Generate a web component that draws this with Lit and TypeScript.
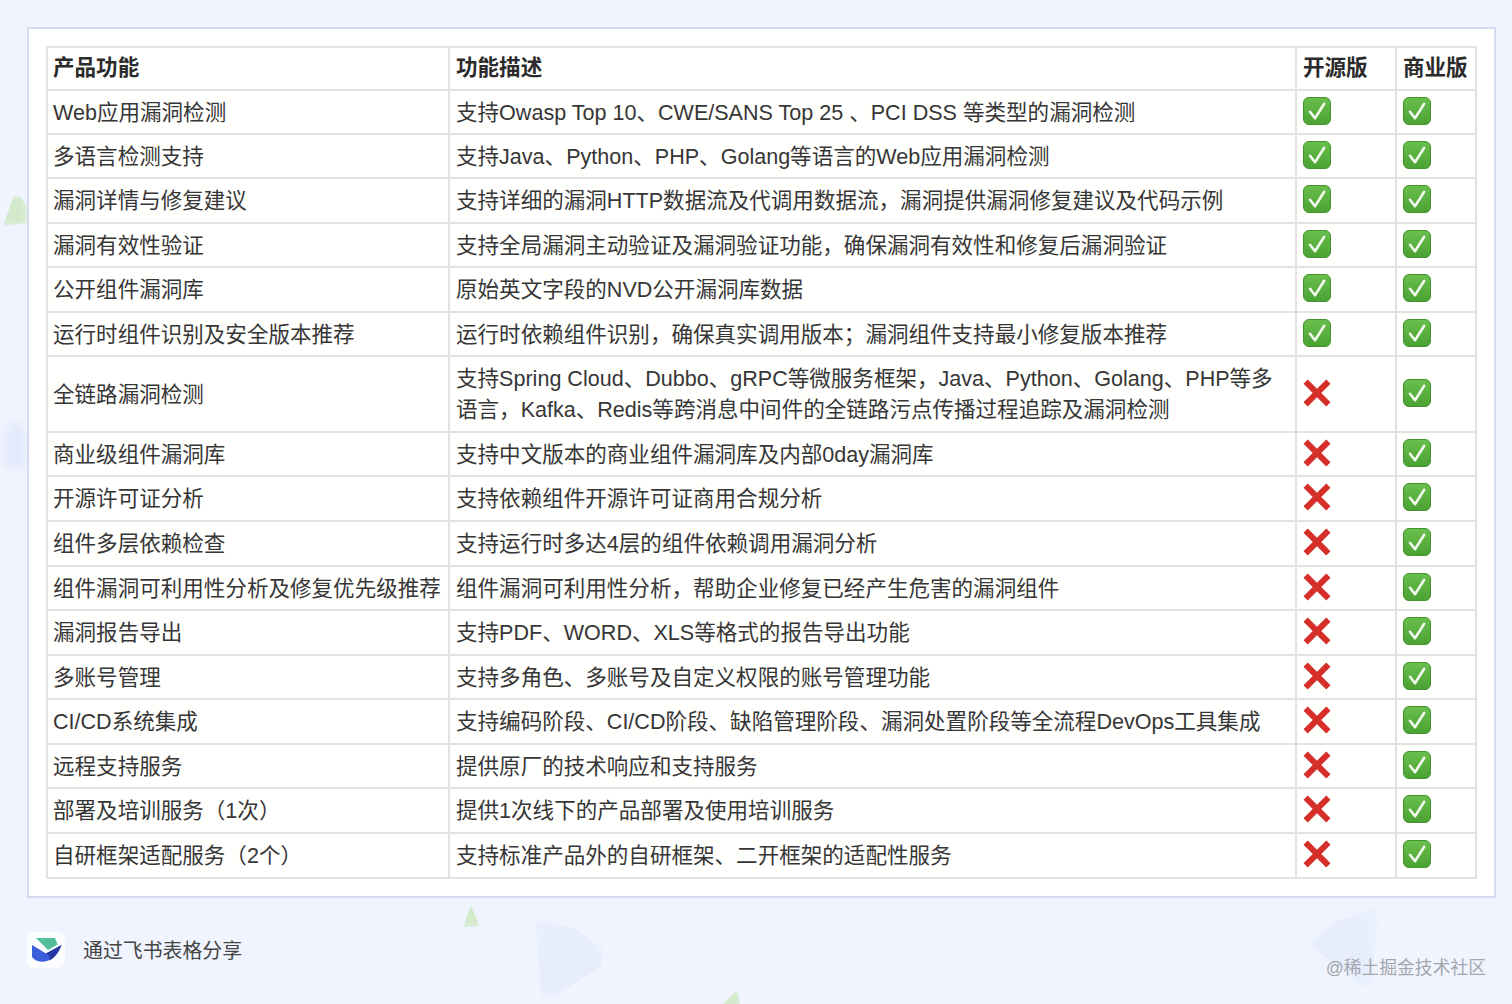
import { LitElement, html, css, svg } from "lit";
import { customElement } from "lit/decorators.js";

type Row = { name: string; desc: string; open: boolean; h: number };

const rows: Row[] = [
  { name: "Web应用漏洞检测", desc: "支持Owasp Top 10、CWE/SANS Top 25 、PCI DSS 等类型的漏洞检测", open: true, h: 44 },
  { name: "多语言检测支持", desc: "支持Java、Python、PHP、Golang等语言的Web应用漏洞检测", open: true, h: 44 },
  { name: "漏洞详情与修复建议", desc: "支持详细的漏洞HTTP数据流及代调用数据流，漏洞提供漏洞修复建议及代码示例", open: true, h: 45 },
  { name: "漏洞有效性验证", desc: "支持全局漏洞主动验证及漏洞验证功能，确保漏洞有效性和修复后漏洞验证", open: true, h: 44 },
  { name: "公开组件漏洞库", desc: "原始英文字段的NVD公开漏洞库数据", open: true, h: 45 },
  { name: "运行时组件识别及安全版本推荐", desc: "运行时依赖组件识别，确保真实调用版本；漏洞组件支持最小修复版本推荐", open: true, h: 44 },
  { name: "全链路漏洞检测", desc: "支持Spring Cloud、Dubbo、gRPC等微服务框架，Java、Python、Golang、PHP等多语言，Kafka、Redis等跨消息中间件的全链路污点传播过程追踪及漏洞检测", open: false, h: 76 },
  { name: "商业级组件漏洞库", desc: "支持中文版本的商业组件漏洞库及内部0day漏洞库", open: false, h: 44 },
  { name: "开源许可证分析", desc: "支持依赖组件开源许可证商用合规分析", open: false, h: 45 },
  { name: "组件多层依赖检查", desc: "支持运行时多达4层的组件依赖调用漏洞分析", open: false, h: 45 },
  { name: "组件漏洞可利用性分析及修复优先级推荐", desc: "组件漏洞可利用性分析，帮助企业修复已经产生危害的漏洞组件", open: false, h: 44 },
  { name: "漏洞报告导出", desc: "支持PDF、WORD、XLS等格式的报告导出功能", open: false, h: 45 },
  { name: "多账号管理", desc: "支持多角色、多账号及自定义权限的账号管理功能", open: false, h: 44 },
  { name: "CI/CD系统集成", desc: "支持编码阶段、CI/CD阶段、缺陷管理阶段、漏洞处置阶段等全流程DevOps工具集成", open: false, h: 45 },
  { name: "远程支持服务", desc: "提供原厂的技术响应和支持服务", open: false, h: 44 },
  { name: "部署及培训服务（1次）", desc: "提供1次线下的产品部署及使用培训服务", open: false, h: 45 },
  { name: "自研框架适配服务（2个）", desc: "支持标准产品外的自研框架、二开框架的适配性服务", open: false, h: 45 },
];

const check = html`<svg class="mark" viewBox="0 0 28 28" aria-hidden="true">
  <defs>
    <linearGradient id="g" x1="0" y1="0" x2="0" y2="1">
      <stop offset="0" stop-color="#6abf4d" />
      <stop offset="1" stop-color="#4aa233" />
    </linearGradient>
  </defs>
  <rect x="0.5" y="0.5" width="27" height="27" rx="5.5" fill="url(#g)" stroke="#43932f" stroke-width="1" />
  <path d="M7 14.8 L12 21.2 L21.2 6.8" fill="none" stroke="#f2faee" stroke-width="2.6" stroke-linejoin="round" stroke-linecap="round" />
</svg>`;

const cross = html`<svg class="mark" viewBox="0 0 28 28" aria-hidden="true">
  <path d="M2.6 2.6 L25.4 25.4 M25.4 2.6 L2.6 25.4" fill="none" stroke="#d62f2a" stroke-width="6" stroke-linecap="butt" />
</svg>`;

const logo = svg`
  <path d="M9 6 H28 L30.5 12.5 L21 18 Z" fill="#55bd9c" />
  <path d="M5 13 L19 21.5 L34.5 13 C31 21 27 27 20 29 C14 30.5 8 29.5 5 25 Z" fill="#3a5fdc" />
  <path d="M19 21.5 L34.5 13 C32 20 28 26 22 28.5 C24 25 22 23 19 21.5 Z" fill="#23399f" />
`;

@customElement("app-root")
export class AppRoot extends LitElement {
  static styles = css`
    :host {
      display: block;
      position: relative;
      width: 1512px;
      height: 1004px;
      overflow: hidden;
      background: #f0f4fe;
      font-family: "Liberation Sans", "Noto Sans CJK SC", sans-serif;
      color: #333;
    }
    .blob {
      position: absolute;
      filter: blur(3px);
    }
    .green { background: #d2e9ca; }
    .blue { background: #e7edfc; filter: blur(6px); }
    .b1 { left: 3px; top: 196px; width: 24px; height: 30px; clip-path: polygon(45% 0, 70% 0, 100% 35%, 100% 90%, 0 100%); }
    .b2 { left: 4px; top: 421px; width: 22px; height: 48px; border-radius: 50% 50% 20% 20%; background: #e4eafb; }
    .b3 { left: 460px; top: 905px; width: 22px; height: 22px; clip-path: polygon(50% 0, 90% 100%, 15% 100%); }
    .b4 { left: 532px; top: 920px; width: 72px; height: 76px; clip-path: polygon(5% 0, 60% 12%, 100% 40%, 95% 62%, 30% 100%, 12% 100%); }
    .b5 { left: 1308px; top: 908px; width: 70px; height: 78px; clip-path: polygon(95% 0, 100% 20%, 90% 100%, 75% 100%, 0 45%, 40% 18%); }
    .b6 { left: 717px; top: 990px; width: 24px; height: 20px; clip-path: polygon(85% 0, 100% 100%, 0 100%); }
    .card {
      position: relative;
      box-sizing: border-box;
      width: 1469px;
      height: 871px;
      margin: 27px 0 0 27px;
      padding: 17px;
      border: 2px solid #d6dcf0;
      background: #fffffe;
    }
    .table {
      display: flex;
      flex-direction: column;
      width: 1431px;
      border-top: 2px solid #e3e3e3;
      border-left: 2px solid #e3e3e3;
      box-sizing: border-box;
    }
    .row {
      display: grid;
      grid-template-columns: 402px 847px 100px 80px;
      box-sizing: border-box;
      border-bottom: 2px solid #e2e2e2;
    }
    .cell {
      display: flex;
      align-items: center;
      box-sizing: border-box;
      padding: 0 5px;
      border-right: 2px solid #e2e2e2;
      font-size: 21.55px;
      line-height: 31px;
      white-space: nowrap;
      color: #363636;
    }
    .desc { padding-left: 6px; padding-right: 14px; white-space: normal; }
    .head .cell { font-weight: 700; color: #2b2b2b; padding-bottom: 2px; }
    .mark-cell { padding: 0 0 3px 6px; }
    .head .mark-cell { padding: 0 0 2px 6px; }
    .mark { display: block; width: 28px; height: 28px; }
    .footer {
      display: flex;
      align-items: center;
      gap: 18px;
      position: relative;
      margin: 34px 0 0 27px;
      font-size: 19.9px;
      color: #444;
    }
    .footer span { padding-bottom: 2px; }
    .logo {
      display: block;
      width: 38px;
      height: 36px;
      background: #fbfdfe;
      border-radius: 7px;
    }
    .credit {
      position: absolute;
      right: 26px;
      bottom: 25px;
      font-size: 17.8px;
      line-height: 22px;
      color: #a3a6ad;
    }
  `;

  render() {
    return html`
      <div class="blob green b1"></div>
      <div class="blob b2"></div>
      <div class="blob green b3"></div>
      <div class="blob blue b4"></div>
      <div class="blob blue b5"></div>
      <div class="blob green b6"></div>
      <div class="card">
        <div class="table">
          <div class="row head" style="height:43px">
            <div class="cell">产品功能</div>
            <div class="cell desc">功能描述</div>
            <div class="cell mark-cell">开源版</div>
            <div class="cell mark-cell">商业版</div>
          </div>
          ${rows.map(
            (r) => html`<div class="row" style="height:${r.h}px">
              <div class="cell">${r.name}</div>
              <div class="cell desc">${r.desc}</div>
              <div class="cell mark-cell">${r.open ? check : cross}</div>
              <div class="cell mark-cell">${check}</div>
            </div>`
          )}
        </div>
      </div>
      <div class="footer">
        <svg class="logo" viewBox="0 0 38 36" aria-hidden="true">${logo}</svg>
        <span>通过飞书表格分享</span>
      </div>
      <div class="credit">@稀土掘金技术社区</div>
    `;
  }
}
